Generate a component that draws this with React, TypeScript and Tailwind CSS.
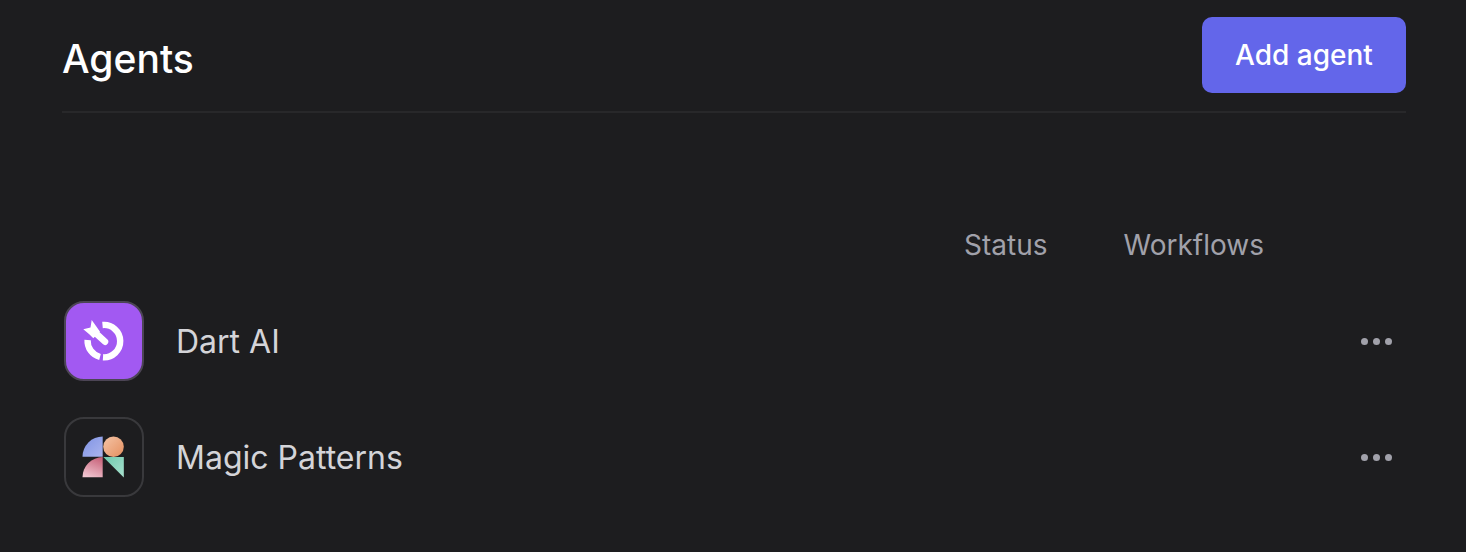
const agents = ["Dart AI", "Magic Patterns"];

const DartLogo = () => (
  <svg viewBox="0 0 80 80" className="h-full w-full">
    <path d="M38.5 24A16.2 16.2 0 1 1 39 56.3" fill="none" stroke="#fff" strokeWidth="6.4" />
    <path d="M23.6 39A16.5 16.5 0 0 0 36 56" fill="none" stroke="#fff" strokeWidth="6.4" />
    <path d="M41 40.7L31 31.5" fill="none" stroke="#fff" strokeWidth="6.5" strokeLinecap="round" />
    <path d="M27.7 19L32 25L36 30.7L29.3 37.3L25 33L19.3 28.3L26.5 26.5Z" fill="#fff" />
  </svg>
);

const MagicLogo = () => (
  <svg viewBox="0 0 80 80" className="h-full w-full">
    <defs>
      <linearGradient id="mpBlue" x1="0" y1="0" x2="1" y2="1">
        <stop offset="0" stopColor="#7f93e4" />
        <stop offset="1" stopColor="#aab4ee" />
      </linearGradient>
      <linearGradient id="mpPeach" x1="0" y1="0" x2="1" y2="1">
        <stop offset="0" stopColor="#f4c4a6" />
        <stop offset="1" stopColor="#e58f5f" />
      </linearGradient>
      <linearGradient id="mpPink" x1="0.7" y1="0" x2="0.3" y2="1">
        <stop offset="0" stopColor="#c9657c" />
        <stop offset="1" stopColor="#f0c4cf" />
      </linearGradient>
      <linearGradient id="mpGreen" x1="0" y1="0" x2="1" y2="1">
        <stop offset="0" stopColor="#6fc9ad" />
        <stop offset="1" stopColor="#a9e2cf" />
      </linearGradient>
    </defs>
    <path d="M38.7 39.7H18.5A20.2 20.2 0 0 1 38.7 19.5Z" fill="url(#mpBlue)" />
    <circle cx="49.5" cy="29.8" r="10.3" fill="url(#mpPeach)" />
    <path d="M38.7 60.3H18.5A20.2 20.2 0 0 1 38.7 40.1Z" fill="url(#mpPink)" />
    <path d="M39.3 40H59.8V60.5Z" fill="url(#mpGreen)" />
  </svg>
);

export default function App() {
  return (
    <div className="h-[552px] w-[1466px] overflow-hidden bg-[#1d1d1f] pl-[62px] pr-[60px] pt-[17px] font-['Inter',sans-serif]">
      {/* Header */}
      <div className="flex items-start justify-between border-b-2 border-[#28282a] pb-[18px]">
        <h1 className="mt-[17px] text-[39px] leading-[50px] font-medium text-white">Agents</h1>
        <button className="h-[76px] w-[204px] rounded-[10px] bg-[#6366ea] text-[28px] font-medium text-white">
          Add agent
        </button>
      </div>

      {/* Column labels */}
      <div className="mt-[115px] flex justify-end gap-[76px] pr-[142px] text-[28px] leading-[34px] text-[#a1a1aa]">
        <span>Status</span>
        <span>Workflows</span>
      </div>

      {/* Rows */}
      <div className="mt-[39px] flex flex-col gap-[36px] pl-[2px]">
        {agents.map((name, i) => (
          <div key={name} className="flex h-[80px] items-center">
            <div
              className={
                i === 0
                  ? "h-[80px] w-[80px] overflow-hidden rounded-[20px] border-2 border-[#4c4555] bg-[#a259f2]"
                  : "h-[80px] w-[80px] overflow-hidden rounded-[20px] border-2 border-[#39393c]"
              }
            >
              <div className="m-[-2px] h-[80px] w-[80px]">{i === 0 ? <DartLogo /> : <MagicLogo />}</div>
            </div>
            <span className="ml-[32px] pt-[2px] text-[32px] text-[#d4d4d8]">{name}</span>
            <div className="ml-auto mr-[14px] flex gap-[5px]">
              <span className="h-[7px] w-[7px] rounded-full bg-[#a1a1aa]" />
              <span className="h-[7px] w-[7px] rounded-full bg-[#a1a1aa]" />
              <span className="h-[7px] w-[7px] rounded-full bg-[#a1a1aa]" />
            </div>
          </div>
        ))}
      </div>
    </div>
  );
}
